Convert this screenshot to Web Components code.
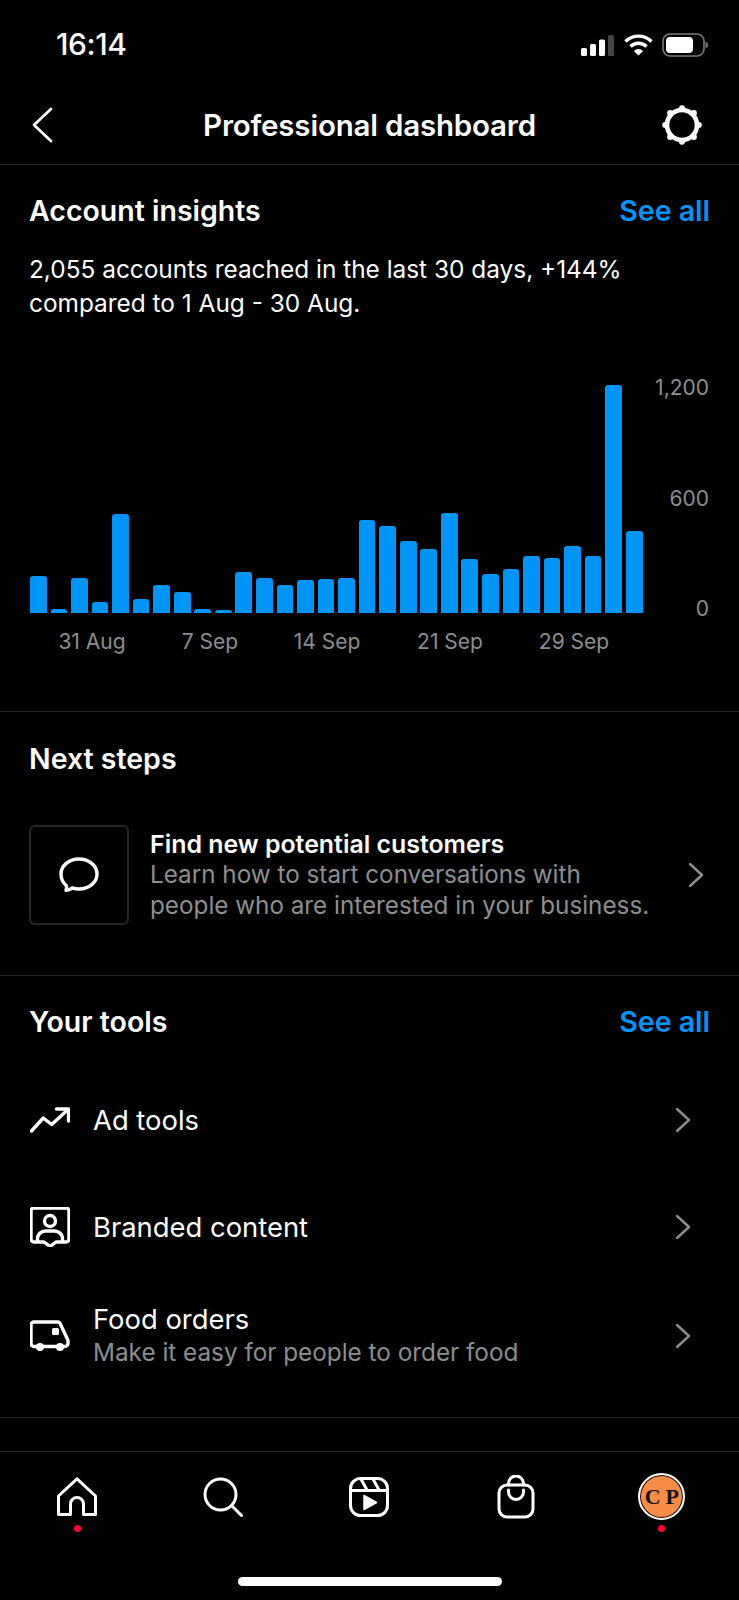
<!DOCTYPE html>
<html lang="en">
<head>
<meta charset="utf-8">
<title>Professional dashboard</title>
<style>
  html, body { margin: 0; background: #000; }
  body {
    width: 739px;
    height: 1600px;
    overflow: hidden;
    display: flex;
    flex-direction: column;
    color: #fff;
    font-family: Inter, "Noto Sans", sans-serif;
  }
  main { flex: 1; }
</style>
</head>
<body>
<status-bar></status-bar>
<top-bar>Professional dashboard</top-bar>
<main>
  <dash-section style="height: 547px">
    <section-title link="See all">Account insights</section-title>
    <reach-chart>2,055 accounts reached in the last 30 days, +144% compared to 1 Aug - 30 Aug.</reach-chart>
  </dash-section>
  <dash-section style="height: 264px; padding-top: 28px">
    <section-title>Next steps</section-title>
    <step-card heading="Find new potential customers">Learn how to start conversations with people who are interested in your business.</step-card>
  </dash-section>
  <dash-section style="height: 442px">
    <section-title link="See all">Your tools</section-title>
    <tool-row icon="ads" style="margin-top: 61px">Ad tools</tool-row>
    <tool-row icon="branded" style="margin-top: 67px">Branded content</tool-row>
    <tool-row icon="food" sub="Make it easy for people to order food" style="margin-top: 56px">Food orders</tool-row>
  </dash-section>
</main>
<tab-bar></tab-bar>

<script>
const chevron = `<svg width="18" height="26" viewBox="0 0 18 26" fill="none" stroke="#8e8e8e" stroke-width="2.4" stroke-linecap="round" stroke-linejoin="round"><path d="M3 2l12 11L3 24"/></svg>`;

const statusTpl = document.createElement("template");
statusTpl.innerHTML = /* HTML */ `
  <style>
    :host {
      display: flex;
      justify-content: space-between;
      align-items: center;
      height: 88px;
      padding: 0 31px 0 56px;
      box-sizing: border-box;
    }
    .time { font-size: 30px; font-weight: 500; letter-spacing: -0.4px; }
    .icons { display: flex; align-items: center; gap: 9px; padding-top: 2px; }
    svg { display: block; }
  </style>
  <span class="time">16:14</span>
  <div class="icons">
    <svg width="34" height="21" viewBox="0 0 34 21" fill="#fff">
      <rect x="0" y="13" width="6" height="8" rx="1.5"/>
      <rect x="9" y="9" width="6" height="12" rx="1.5"/>
      <rect x="18" y="4.5" width="6" height="16.5" rx="1.5"/>
      <rect x="27" y="0" width="6" height="21" rx="1.5" fill="#444"/>
    </svg>
    <svg width="29" height="22" viewBox="0 0 29 22" fill="none" stroke="#fff" stroke-width="3.4">
      <path d="M1.5 7.5a18.5 18.5 0 0 1 26 0"/>
      <path d="M6.5 12.5a11.5 11.5 0 0 1 16 0"/>
      <path d="M14.5 21.5l-4.6-4.6a6.5 6.5 0 0 1 9.2 0z" fill="#fff" stroke="none"/>
    </svg>
    <svg width="46" height="24" viewBox="0 0 46 24" fill="none">
      <rect x="1" y="1" width="41" height="22" rx="7" stroke="#7a7a7a" stroke-width="1.6"/>
      <rect x="4" y="4" width="27" height="16" rx="4" fill="#fff"/>
      <path d="M43.500 8.500c1.500.6 2.500 2 2.500 3.500s-1 2.900-2.500 3.500z" fill="#7a7a7a"/>
    </svg>
  </div>
`;

class StatusBar extends HTMLElement {
  connectedCallback() {
    this.attachShadow({ mode: "open" }).appendChild(statusTpl.content.cloneNode(true));
  }
}

const topTpl = document.createElement("template");
topTpl.innerHTML = /* HTML */ `
  <style>
    :host {
      display: grid;
      grid-template-columns: 1fr auto 1fr;
      align-items: center;
      height: 77px;
      padding: 0 34px 2px;
      box-sizing: border-box;
      border-bottom: 1px solid #262626;
    }
    .title { font-size: 29.500px; font-weight: 600; letter-spacing: -0.2px; }
    .back { margin-left: -3px; }
    .gear { justify-self: end; margin-right: 3px; }
    svg { display: block; }
  </style>
  <svg class="back" width="22" height="36" viewBox="0 0 22 36" fill="none" stroke="#fff" stroke-width="2.800" stroke-linecap="round" stroke-linejoin="round"><path d="M20 2L3 18l17 16"/></svg>
  <span class="title"><slot></slot></span>
  <svg class="gear" width="40" height="40" viewBox="0 0 40 40" fill="#fff">
    <circle cx="20" cy="20" r="15" fill="none" stroke="#fff" stroke-width="4.600"/>
    <circle cx="20" cy="3.200" r="3"/><circle cx="31.900" cy="8.100" r="3"/>
    <circle cx="36.800" cy="20" r="3"/><circle cx="31.900" cy="31.900" r="3"/>
    <circle cx="20" cy="36.800" r="3"/><circle cx="8.100" cy="31.900" r="3"/>
    <circle cx="3.200" cy="20" r="3"/><circle cx="8.100" cy="8.100" r="3"/>
  </svg>
`;

class TopBar extends HTMLElement {
  connectedCallback() {
    this.attachShadow({ mode: "open" }).appendChild(topTpl.content.cloneNode(true));
  }
}

const sectionTpl = document.createElement("template");
sectionTpl.innerHTML = /* HTML */ `
  <style>
    :host {
      display: block;
      box-sizing: border-box;
      padding: 27px 29px 0;
      border-bottom: 1px solid #262626;
    }
  </style>
  <slot></slot>
`;

class DashSection extends HTMLElement {
  connectedCallback() {
    this.attachShadow({ mode: "open" }).appendChild(sectionTpl.content.cloneNode(true));
  }
}

const titleTpl = document.createElement("template");
titleTpl.innerHTML = /* HTML */ `
  <style>
    :host {
      display: flex;
      justify-content: space-between;
      align-items: center;
      height: 36px;
      font-size: 28.500px;
      font-weight: 600;
    }
    .link { color: #0095f6; }
  </style>
  <span><slot></slot></span>
  <span class="link"></span>
`;

class SectionTitle extends HTMLElement {
  connectedCallback() {
    const shadow = this.attachShadow({ mode: "open" });
    shadow.appendChild(titleTpl.content.cloneNode(true));
    shadow.querySelector(".link").textContent = this.getAttribute("link") || "";
  }
}

const chartTpl = document.createElement("template");
chartTpl.innerHTML = /* HTML */ `
  <style>
    :host { display: block; }
    p {
      margin: 24px 0 0;
      font-size: 24.400px;
      line-height: 34px;
      width: 620px;
    }
    .plot {
      display: flex;
      justify-content: space-between;
      height: 238px;
      margin-top: 55px;
      margin-left: 1px;
    }
    .bars {
      display: flex;
      align-items: flex-end;
      gap: 3.870px;
    }
    .bars i {
      display: block;
      width: 16.700px;
      background: #0095f6;
      border-radius: 3px 3px 0 0;
    }
    .axis {
      display: flex;
      flex-direction: column;
      justify-content: space-between;
      align-items: flex-end;
      height: 245px;
      padding: 1px 1px 0 0;
      font-size: 21px;
      line-height: 24px;
      color: #8e8e8e;
    }
    .dates {
      display: grid;
      grid-template-columns: 120px 116px 118px 128px 120px;
      margin: 16px 0 0 3px;
      font-size: 21px;
      line-height: 26px;
      color: #8e8e8e;
      text-align: center;
    }
  </style>
  <p><slot></slot></p>
  <div class="plot">
    <div class="bars"></div>
    <div class="axis"><span>1,200</span><span>600</span><span>0</span></div>
  </div>
  <div class="dates">
    <span>31 Aug</span><span>7 Sep</span><span>14 Sep</span><span>21 Sep</span><span>29 Sep</span>
  </div>
`;

const reach = [37, 4, 35, 11, 99, 14, 28, 21, 4, 3, 41, 35, 28, 33, 34, 35,
  93, 87, 72, 64, 100, 54, 39, 44, 57, 55, 67, 57, 228, 82];

class ReachChart extends HTMLElement {
  connectedCallback() {
    const shadow = this.attachShadow({ mode: "open" });
    shadow.appendChild(chartTpl.content.cloneNode(true));
    const bars = shadow.querySelector(".bars");
    reach.forEach((h) => {
      const bar = document.createElement("i");
      bar.style.height = h + "px";
      bars.appendChild(bar);
    });
  }
}

const cardTpl = document.createElement("template");
cardTpl.innerHTML = /* HTML */ `
  <style>
    :host {
      display: flex;
      align-items: center;
      margin-top: 49px;
      padding-right: 5px;
    }
    .tile {
      flex: none;
      display: flex;
      align-items: center;
      justify-content: center;
      width: 100px;
      height: 100px;
      box-sizing: border-box;
      border: 2px solid #262626;
      border-radius: 6px;
      margin-right: 21px;
    }
    .text { flex: 1; font-size: 24.250px; line-height: 30.200px; }
    h3 { margin: 0; font: inherit; font-size: 24.900px; font-weight: 600; }
    .sub { color: #8e8e8e; width: 508px; margin-top: 1px; }
    svg { display: block; }
  </style>
  <div class="tile">
    <svg width="40" height="36" viewBox="0 0 40 36" fill="none" stroke="#fff" stroke-width="3.400" stroke-linejoin="round"><path d="M20 2c10 0 18 6.600 18 15s-8 15-18 15c-2.400 0-4.600-.4-6.600-1-1.800 1.300-4 2.200-6.400 2.400.6-1.400.8-3 .4-4.600C4 25.800 2 21.800 2 17 2 8.600 10 2 20 2z"/></svg>
  </div>
  <div class="text">
    <h3></h3>
    <div class="sub"><slot></slot></div>
  </div>
  ${chevron}
`;

class StepCard extends HTMLElement {
  connectedCallback() {
    const shadow = this.attachShadow({ mode: "open" });
    shadow.appendChild(cardTpl.content.cloneNode(true));
    shadow.querySelector("h3").textContent = this.getAttribute("heading");
  }
}

const toolIcons = {
  ads: `<svg width="40" height="26" viewBox="0 0 40 26" fill="none" stroke="#fff" stroke-width="3.400" stroke-linecap="round" stroke-linejoin="round"><path d="M1.500 24L13.300 11l8.400 6.500L37.500 3"/><path d="M26.500 2H38.500V14"/></svg>`,
  branded: `<svg width="40" height="40" viewBox="0 0 40 40" fill="none" stroke="#fff" stroke-width="3.400" stroke-linejoin="round"><path d="M14 35H4a3 3 0 0 1-3-3V4a3 3 0 0 1 3-3h32a3 3 0 0 1 3 3v28a3 3 0 0 1-3 3H26l-6 4.500z"/><circle cx="20" cy="14" r="5.500"/><path d="M7.500 35v-3c0-5 4-8 8-8h9c4 0 8 3 8 8v3"/></svg>`,
  food: `<svg width="40" height="32" viewBox="0 0 40 32" fill="none" stroke="#fff" stroke-width="3.400" stroke-linejoin="round"><path d="M6 26.500H4a3 3 0 0 1-3-3V5a3 3 0 0 1 3-3h23.500a3 3 0 0 1 2.800 1.900l7.500 16.100c.3.600.2 1.100.2 1.700v1.800a3 3 0 0 1-3 3H6z"/><circle cx="10" cy="27" r="4" fill="#fff" stroke="none"/><circle cx="30" cy="27" r="4" fill="#fff" stroke="none"/><rect x="22" y="8" width="7" height="7" rx="1.500" fill="#fff" stroke="none"/></svg>`
};

const toolTpl = document.createElement("template");
toolTpl.innerHTML = /* HTML */ `
  <style>
    :host {
      display: flex;
      align-items: center;
      padding-right: 18px;
      min-height: 40px;
    }
    .icon { flex: none; width: 40px; margin: 0 23px 0 1px; display: flex; justify-content: center; }
    .text { flex: 1; font-size: 27.400px; line-height: 33px; }
    .sub { font-size: 24.300px; color: #8e8e8e; }
    svg { display: block; }
  </style>
  <div class="icon"></div>
  <div class="text">
    <div><slot></slot></div>
    <div class="sub"></div>
  </div>
  ${chevron}
`;

class ToolRow extends HTMLElement {
  connectedCallback() {
    const shadow = this.attachShadow({ mode: "open" });
    shadow.appendChild(toolTpl.content.cloneNode(true));
    shadow.querySelector(".icon").innerHTML = toolIcons[this.getAttribute("icon")];
    const sub = shadow.querySelector(".sub");
    if (this.hasAttribute("sub")) sub.textContent = this.getAttribute("sub");
    else sub.remove();
  }
}

const tabTpl = document.createElement("template");
tabTpl.innerHTML = /* HTML */ `
  <style>
    :host {
      display: block;
      height: 149px;
      box-sizing: border-box;
      border-top: 1px solid #262626;
    }
    .tabs {
      display: grid;
      grid-template-columns: repeat(5, 1fr);
      padding: 21px 4px 0;
    }
    .tab {
      position: relative;
      display: flex;
      justify-content: center;
      align-items: center;
      height: 47px;
    }
    .dot {
      position: absolute;
      left: 50%;
      top: 52px;
      width: 7px;
      height: 7px;
      margin-left: -3.500px;
      border-radius: 50%;
      background: #ff0034;
    }
    .avatar {
      display: flex;
      align-items: center;
      justify-content: center;
      gap: 5px;
      width: 47px;
      height: 47px;
      box-sizing: border-box;
      border-radius: 50%;
      border: 2px solid #fff;
      box-shadow: inset 0 0 0 1px #000;
      background: #f68c45;
      color: #111;
      font: bold 22px "Liberation Serif", serif;
    }
    .home-bar {
      width: 264px;
      height: 9px;
      margin: 57px auto 0;
      border-radius: 5px;
      background: #fff;
    }
    svg { display: block; }
  </style>
  <div class="tabs">
    <div class="tab">
      <svg width="40" height="40" viewBox="0 0 40 40" fill="none" stroke="#fff" stroke-width="3" stroke-linejoin="round"><path d="M1.500 37.500V19L20 1.800 38.500 19v18.500H26.500V27a6.500 6.500 0 0 0-13 0v10.500z"/></svg>
      <span class="dot"></span>
    </div>
    <div class="tab">
      <svg width="40" height="40" viewBox="0 0 40 40" fill="none" stroke="#fff" stroke-width="3" stroke-linecap="round"><circle cx="17.500" cy="17.500" r="15.500"/><path d="M28.500 28.500l10 10"/></svg>
    </div>
    <div class="tab">
      <svg width="40" height="40" viewBox="0 0 40 40" fill="none" stroke="#fff" stroke-width="3" stroke-linejoin="round"><rect x="1.500" y="1.500" width="37" height="37" rx="10"/><path d="M1.500 13.500h37M12 2l6 11M24 2l6 11"/><path d="M15 18.500v14l12.500-7z" fill="#fff" stroke="#fff" stroke-width="1.500"/></svg>
    </div>
    <div class="tab">
      <svg width="40" height="44" viewBox="0 0 40 44" fill="none" stroke="#fff" stroke-width="3" stroke-linecap="round"><rect x="3" y="10" width="34" height="32" rx="8"/><path d="M12.500 10V8.500a7.500 7.500 0 0 1 15 0V10M12.500 15v2a7.500 7.500 0 0 0 15 0v-2"/></svg>
    </div>
    <div class="tab">
      <div class="avatar"><span>C</span><span>P</span></div>
      <span class="dot"></span>
    </div>
  </div>
  <div class="home-bar"></div>
`;

class TabBar extends HTMLElement {
  connectedCallback() {
    this.attachShadow({ mode: "open" }).appendChild(tabTpl.content.cloneNode(true));
  }
}

customElements.define("status-bar", StatusBar);
customElements.define("top-bar", TopBar);
customElements.define("dash-section", DashSection);
customElements.define("section-title", SectionTitle);
customElements.define("reach-chart", ReachChart);
customElements.define("step-card", StepCard);
customElements.define("tool-row", ToolRow);
customElements.define("tab-bar", TabBar);
</script>
</body>
</html>
